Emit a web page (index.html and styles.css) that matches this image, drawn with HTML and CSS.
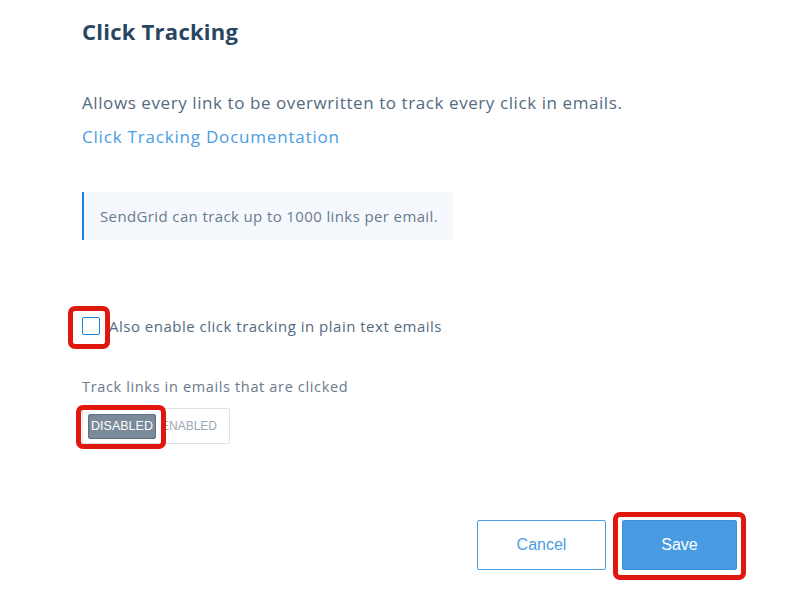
FILE: index.html
```html
<!DOCTYPE html>
<html>
<head>
<meta charset="utf-8">
<link rel="stylesheet" href="styles.css">
</head>
<body>
<div class="page">
  <h1 class="title">Click Tracking</h1>
  <p class="desc">Allows every link to be overwritten to track every click in emails.</p>
  <a class="doc-link" href="#">Click Tracking Documentation</a>
  <div class="info">SendGrid can track up to 1000 links per email.</div>
  <label class="check-row">
    <span class="checkbox"><span class="mark mark-check"></span></span>
    <span class="check-label">Also enable click tracking in plain text emails</span>
  </label>
  <div class="field-label">Track links in emails that are clicked</div>
  <div class="toggle">
    <span class="toggle-opt active">DISABLED</span>
    <span class="toggle-opt inactive">ENABLED</span>
    <span class="mark mark-toggle"></span>
  </div>
  <div class="actions">
    <button class="btn btn-secondary">Cancel</button>
    <button class="btn btn-primary">Save<span class="mark mark-save"></span></button>
  </div>
</div>
</body>
</html>
```

FILE: styles.css
```css
html, body {
  margin: 0;
  padding: 0;
  background: #ffffff;
}
body {
  width: 803px;
  height: 616px;
  overflow: hidden;
  font-family: "Open Sans", "Liberation Sans", sans-serif;
}
.page {
  display: flex;
  flex-direction: column;
  align-items: flex-start;
  padding: 16px 66px 0 82px;
}
.title {
  margin: 0;
  font-size: 22px;
  line-height: 30px;
  font-weight: 700;
  color: #294661;
  letter-spacing: 0.25px;
}
.desc {
  margin: 45px 0 0;
  font-size: 17px;
  line-height: 24px;
  color: #546b81;
  letter-spacing: 0.58px;
}
.doc-link {
  margin-top: 10px;
  font-size: 17px;
  line-height: 24px;
  color: #4a9de3;
  text-decoration: none;
  letter-spacing: 0.8px;
}
.info {
  margin-top: 43px;
  box-sizing: border-box;
  width: 371px;
  height: 48px;
  display: flex;
  align-items: center;
  padding-left: 16px;
  border-left: 2px solid #1a82e2;
  background: #f5f9fd;
  font-size: 15px;
  color: #6a7b8c;
  letter-spacing: 0.38px;
}
.check-row {
  margin-top: 74px;
  display: flex;
  align-items: center;
  height: 24px;
  position: relative;
}
.checkbox {
  position: relative;
  box-sizing: border-box;
  width: 18px;
  height: 18px;
  border: 1px solid #1a82e2;
  border-radius: 2px;
  background: #fff;
  margin-right: 9px;
}
.check-label {
  font-size: 15px;
  color: #546b81;
  letter-spacing: 0.5px;
}
.field-label {
  margin-top: 39px;
  font-size: 14.5px;
  line-height: 20px;
  color: #6a7b8c;
  letter-spacing: 0.65px;
}
.toggle {
  position: relative;
  margin-top: 11px;
  display: flex;
  align-items: center;
  box-sizing: border-box;
  height: 36px;
  width: 148px;
  padding: 0 5px;
  border: 1px solid #dde3e9;
  border-radius: 2px;
}
.toggle-opt {
  font-family: "Liberation Sans", Arial, sans-serif;
  font-size: 12px;
  color: #9aa7b4;
  height: 25px;
  display: flex;
  align-items: center;
}
.toggle-opt.inactive {
  margin-left: 5px;
}
.toggle-opt.active {
  box-sizing: border-box;
  width: 68px;
  justify-content: center;
  background: #7b8a9b;
  color: #ffffff;
  font-size: 12.5px;
  border-radius: 2px;
  border: 1px solid #5f6e7e;
}
.actions {
  align-self: stretch;
  margin-top: 76px;
  display: flex;
  justify-content: flex-end;
  gap: 16px;
}
.btn {
  position: relative;
  box-sizing: border-box;
  height: 50px;
  font-family: "Liberation Sans", Arial, sans-serif;
  font-size: 16px;
  border-radius: 2px;
  cursor: pointer;
}
.btn-secondary {
  width: 129px;
  background: #fff;
  border: 1px solid #4a9de3;
  color: #4a9de3;
}
.btn-primary {
  width: 115px;
  background: #489be3;
  border: 1px solid #3d8fd8;
  color: #ffffff;
}
.mark {
  position: absolute;
  box-sizing: border-box;
  border: 5px solid #e0170f;
  border-radius: 7px;
  pointer-events: none;
}
.mark-check {
  left: -15px;
  top: -12px;
  width: 42px;
  height: 43px;
}
.mark-toggle {
  left: -7px;
  top: -4px;
  width: 90px;
  height: 44px;
}
.mark-save {
  left: -10px;
  top: -9px;
  width: 133px;
  height: 68px;
}
```
